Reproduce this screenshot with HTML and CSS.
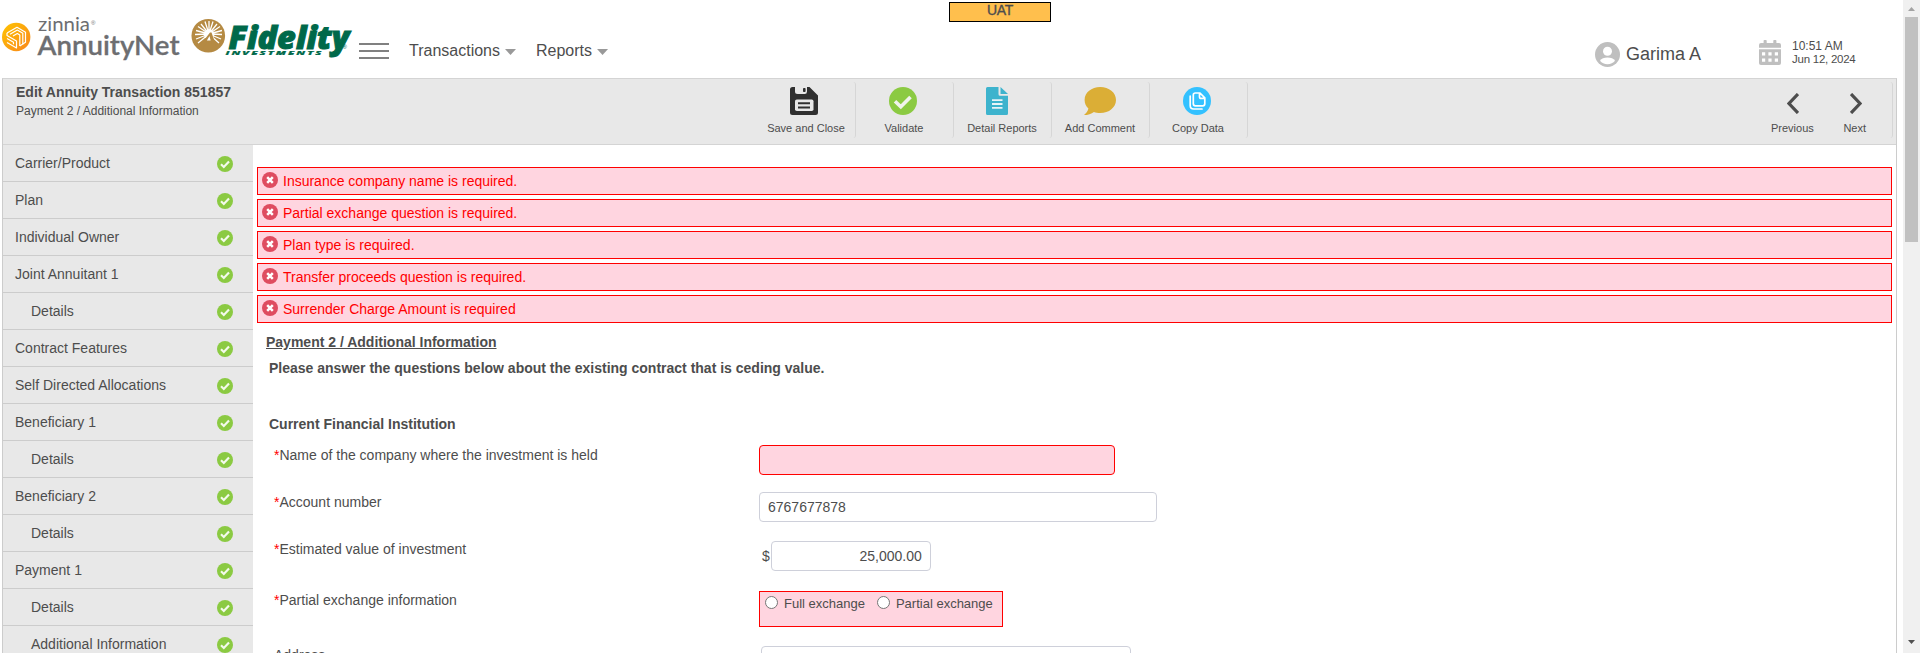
FILE: index.html
```html
<!DOCTYPE html>
<html lang="en">
<head>
<meta charset="utf-8">
<title>AnnuityNet - Edit Annuity Transaction</title>
<link rel="stylesheet" href="styles.css">
</head>
<body>
<svg width="0" height="0" class="defs">
  <symbol id="ok" viewBox="0 0 16 16"><circle cx="8" cy="8" r="8" fill="#8bca42"/><path d="M4 8.3 6.8 11 12 5.6" fill="none" stroke="#f4faec" stroke-width="2.2"/></symbol>
  <symbol id="bad" viewBox="0 0 16 16"><circle cx="8" cy="8" r="8" fill="#df4c60"/><path d="m5.2 5.2 5.6 5.6m0-5.6-5.6 5.6" fill="none" stroke="#fff" stroke-width="2.5"/></symbol>
</svg>
<div class="env">UAT</div>
<div class="window">
  <div class="page">
    <header class="top">
      <svg class="logos" width="356" height="66" viewBox="0 0 356 66">
        <defs>
          <linearGradient id="sun" x1="0" y1="0" x2="1" y2="1"><stop offset="0" stop-color="#ffc400"/><stop offset="1" stop-color="#f9861d"/></linearGradient>
        </defs>
        <circle cx="16.200" cy="37" r="14.200" fill="url(#sun)"/>
        <g fill="none" stroke="#fff" stroke-width="1.200" stroke-linejoin="round">
          <path d="M7 33 17 27.300 25.500 32.200V42.300L22.800 44"/>
          <path d="M7 33v2.500l9.500 5.500v7L7 42.500"/>
          <path d="M10 34.200 17.300 30 22.800 33.200V44l-3 1.900"/>
          <path d="M13 36 17.300 33.500 19.800 35V45.900M7 38.500l6.500 3.800v2"/>
        </g>
        <text class="zinnia" x="38" y="31" textLength="52" lengthAdjust="spacingAndGlyphs">zinnia</text>
        <text class="reg" x="91" y="24.500">®</text>
        <text class="anet" x="37.500" y="55.300" textLength="142" lengthAdjust="spacingAndGlyphs">AnnuityNet</text>
        <circle cx="208.300" cy="35.700" r="16.800" fill="#b58a43"/>
        <g stroke="#fff" stroke-width="1.300" fill="none">
          <path d="M209 34V21M209 34l-4-12.500M209 34l4-12.500M209 34l-8-10M209 34l8-10M209 34l-11-7.500M209 34l11-7.500M209 34l-13-3.500M209 34l13-3.500M209 34l-14 .5M209 34l13 .5M209 34l-13 5M209 34l12 5M209 34l-11 9M209 34l10 9"/>
        </g>
        <circle cx="209" cy="34.500" r="5" fill="#fff"/>
        <path d="M210 32.500h1.500l5.500 16-3.500 3-2.500-9h-4l-5.500 8-4-2Z" fill="#b58a43"/>
        <path d="m209.500 36-2.600 4.500h3.700Z" fill="#fff"/>
        <text class="fid" x="228.500" y="48.800" textLength="121" lengthAdjust="spacingAndGlyphs">Fidelity</text>
        <text class="inv" x="225.500" y="55" textLength="98" lengthAdjust="spacingAndGlyphs">INVESTMENTS</text>
        <text class="reg reg-f" x="342.500" y="49">®</text>
      </svg>
      <div class="burger"><i></i><i></i><i></i></div>
      <nav class="menu">
        <a>Transactions<b class="caret"></b></a>
        <a>Reports<b class="caret"></b></a>
      </nav>
      <div class="user">
        <svg width="25" height="25" viewBox="0 0 25 25"><circle cx="12.500" cy="12.500" r="12.500" fill="#bfbfbf"/><circle cx="12.500" cy="9.300" r="4.500" fill="#fff"/><path d="M5 18.800c1.500-2.200 4-3.300 7.500-3.300s6 1.100 7.500 3.300c-1.800 2.200-4.300 3.400-7.500 3.400S6.800 21 5 18.800Z" fill="#fff"/></svg>
        <span>Garima A</span>
      </div>
      <div class="clock">
        <svg width="22" height="25" viewBox="0 0 22 25"><path d="M0 7.800V5a2 2 0 0 1 2-2h2.600V.8q0-.8.800-.8h1.500q.8 0 .8.800V3h6.600V.8q0-.8.800-.8h1.500q.8 0 .8.800V3H20a2 2 0 0 1 2 2v2.800Z" fill="#bfbfbf"/><path d="M0 9.300h22V23a2 2 0 0 1-2 2H2a2 2 0 0 1-2-2Z" fill="#bfbfbf"/><path d="M3 12.200h3.200v3.200H3zm6.400 0h3.200v3.200H9.400zm6.400 0H19v3.200h-3.200zM3 18.600h3.200v3.200H3zm6.400 0h3.200v3.200H9.400zm6.400 0H19v3.200h-3.200z" fill="#fff"/></svg>
        <div><div class="time">10:51 AM</div><div class="date">Jun 12, 2024</div></div>
      </div>
    </header>
    <div class="frame">
      <div class="toolbar">
        <div class="heading">
          <div class="title">Edit Annuity Transaction 851857</div>
          <div class="subtitle">Payment 2 / Additional Information</div>
        </div>
        <div class="tools">
          <div class="tool t-save">
            <svg width="28" height="28" viewBox="0 0 28 28"><path d="M2.500 0H5v4.500Q5 7 7.500 7h7.200Q17 7 17 4.500V0h2.500L28 8.500v17a2.500 2.500 0 0 1-2.500 2.500h-23A2.500 2.500 0 0 1 0 25.500v-23A2.500 2.500 0 0 1 2.500 0Z" fill="#303030"/><rect x="13" y="1" width="2.600" height="4" rx=".8" fill="#303030"/><rect x="5" y="12.500" width="18.500" height="11.500" rx="1.800" fill="#e8e8e8"/><path d="M8 16.200h12M8 20.400h12" stroke="#303030" stroke-width="2"/></svg>
            <span>Save and Close</span>
          </div>
          <div class="tool t-val">
            <svg width="28" height="28" viewBox="0 0 28 28"><circle cx="14" cy="14" r="14" fill="#8bca42"/><path d="m6 14.300 5.800 5.500L21.500 10" fill="none" stroke="#f0f3ec" stroke-width="3.600"/></svg>
            <span>Validate</span>
          </div>
          <div class="tool t-det">
            <svg width="22" height="28" viewBox="0 0 22 28"><path d="M1.500 0H12.500v7.200q0 1.500 1.500 1.500H22V26.500q0 1.500-1.500 1.500h-19Q0 28 0 26.500v-25Q0 0 1.500 0Z" fill="#3db3cd"/><path d="M14.500 0 22 7h-7.500Z" fill="#3db3cd"/><path d="M6 13.100h10.500M6 17h10.500M6 20.800h10.500" stroke="#e8f4f7" stroke-width="1.800"/></svg>
            <span>Detail Reports</span>
          </div>
          <div class="tool t-com">
            <svg width="32" height="28" viewBox="0 0 32 28"><path d="M16.200 0C25 0 32 5.600 32 12.900S25 26 16.200 26c-2.300 0-4.500-.3-6.300-1.100C7.500 27 3.800 28 0 28c2.300-1.800 4-3.900 4.400-6.500C2 19.300.6 16.200.6 12.900.6 5.600 7.500 0 16.200 0Z" fill="#dbae36"/></svg>
            <span>Add Comment</span>
          </div>
          <div class="tool t-copy">
            <svg width="28" height="28" viewBox="0 0 28 28"><circle cx="14" cy="14" r="14" fill="#33c1ff"/><g fill="none" stroke="#fff" stroke-width="1.700" stroke-linejoin="round"><path d="M12.300 6H17l4.800 4.800v6q0 2-2 2h-7.500q-2 0-2-2V8q0-2 2-2ZM16.500 6.500v3.200q0 1.700 1.700 1.700h3.300"/><path d="M7.200 9.200v9.300q0 3.500 3.500 3.500h8.300" stroke-linecap="round"/></g></svg>
            <span>Copy Data</span>
          </div>
        </div>
        <div class="pager">
          <div class="step"><svg width="12" height="21" viewBox="0 0 12 21"><path d="M11 1 2 10.500 11 20" fill="none" stroke="#4d4d4d" stroke-width="3.200"/></svg><span>Previous</span></div>
          <div class="step"><svg width="12" height="21" viewBox="0 0 12 21"><path d="m1 1 9 9.500L1 20" fill="none" stroke="#4d4d4d" stroke-width="3.200"/></svg><span>Next</span></div>
        </div>
      </div>
      <div class="body">
        <ul class="side">
          <li>Carrier/Product<svg><use href="#ok"/></svg></li>
          <li>Plan<svg><use href="#ok"/></svg></li>
          <li>Individual Owner<svg><use href="#ok"/></svg></li>
          <li>Joint Annuitant 1<svg><use href="#ok"/></svg></li>
          <li class="sub">Details<svg><use href="#ok"/></svg></li>
          <li>Contract Features<svg><use href="#ok"/></svg></li>
          <li>Self Directed Allocations<svg><use href="#ok"/></svg></li>
          <li>Beneficiary 1<svg><use href="#ok"/></svg></li>
          <li class="sub">Details<svg><use href="#ok"/></svg></li>
          <li>Beneficiary 2<svg><use href="#ok"/></svg></li>
          <li class="sub">Details<svg><use href="#ok"/></svg></li>
          <li>Payment 1<svg><use href="#ok"/></svg></li>
          <li class="sub">Details<svg><use href="#ok"/></svg></li>
          <li class="sub">Additional Information<svg><use href="#ok"/></svg></li>
        </ul>
        <main class="main">
          <div class="alerts">
            <div class="alert"><svg><use href="#bad"/></svg>Insurance company name is required.</div>
            <div class="alert"><svg><use href="#bad"/></svg>Partial exchange question is required.</div>
            <div class="alert"><svg><use href="#bad"/></svg>Plan type is required.</div>
            <div class="alert"><svg><use href="#bad"/></svg>Transfer proceeds question is required.</div>
            <div class="alert"><svg><use href="#bad"/></svg>Surrender Charge Amount is required</div>
          </div>
          <h1>Payment 2 / Additional Information</h1>
          <p class="lead">Please answer the questions below about the existing contract that is ceding value.</p>
          <h2>Current Financial Institution</h2>
          <div class="row r1"><label><em>*</em>Name of the company where the investment is held</label><div class="box invalid w-name"></div></div>
          <div class="row r2"><label><em>*</em>Account number</label><div class="box w-acct">6767677878</div></div>
          <div class="row r3"><label><em>*</em>Estimated value of investment</label><div class="money"><span>$</span><div class="box w-val">25,000.00</div></div></div>
          <div class="row r4"><label><em>*</em>Partial exchange information</label>
            <div class="radios"><span class="opt"><i></i>Full exchange</span><span class="opt"><i></i>Partial exchange</span></div></div>
          <div class="row r5"><label>Address</label><div class="box w-addr"></div></div>
        </main>
      </div>
    </div>
  </div>
  <div class="scroll"><i class="up"></i><div class="thumb"></div><i class="down"></i></div>
</div>
</body>
</html>
```
FILE: styles.css
```css
* { box-sizing: border-box; }
html, body { height: 653px; overflow: hidden; }
body { margin: 0; background: #fff; color: #4d4d4d; font: 14px/20px "Liberation Sans", Arial, sans-serif; }
.defs { position: absolute; }
svg { display: block; flex: none; }
.env { position: absolute; left: 949px; top: 2px; width: 102px; height: 20px; border: 1px solid #000; background: #ffbf4d; text-align: center; font-size: 14px; line-height: 15px; letter-spacing: -.3px; -webkit-text-stroke: .35px #4d4d4d; }
.window { display: flex; height: 653px; }
.page { flex: 1; display: flex; flex-direction: column; padding: 0 6px 0 2px; min-width: 0; }

.top { display: flex; height: 78px; flex: none; margin-left: -2px; }
.logos { flex: none; overflow: visible; }
.zinnia { font: 19.500px Lato, sans-serif; fill: #6d6e71; }
.anet { font: 600 27px Lato, sans-serif; fill: #6d6e71; stroke: #6d6e71; stroke-width: .3px; }
.reg { font: 6px Arial, "Liberation Sans", sans-serif; fill: #6d6e71; }
.reg-f { fill: #00694a; }
.fid { font: italic 800 32px "Open Sans", sans-serif; fill: #00694a; stroke: #00694a; stroke-width: 1px; }
.inv { font: italic 800 5.500px "Open Sans", sans-serif; fill: #00694a; stroke: #00694a; stroke-width: .2px; letter-spacing: 1px; }
.burger { width: 30px; margin: 43px 0 0 3px; display: flex; flex-direction: column; gap: 5px; }
.burger i { height: 2px; background: #808080; }
.menu { display: flex; gap: 20px; margin: 41px 0 0 20px; font-size: 16px; }
.menu a { display: flex; }
.caret { margin: 8px 0 0 5px; width: 11px; height: 6px; background: #999; clip-path: polygon(0 0, 100% 0, 50% 100%); }
.user { display: flex; gap: 6px; margin: 42px 0 0 auto; font-size: 18px; line-height: 24px; width: 164px; }
.clock { display: flex; gap: 11px; width: 137px; margin-top: 40px; font-size: 12px; line-height: 14px; margin-right: 1px; }
.clock > div { margin-top: -1px; white-space: nowrap; }
.date { margin-top: -1px; letter-spacing: -.25px; font-size: 11.500px; }

.frame { flex: 1; border: 1px solid #ccc; border-bottom: 0; border-top-color: #d4d4d4; display: flex; flex-direction: column; min-height: 0; }
.toolbar { display: flex; height: 66px; flex: none; background: #e8e8e8; border-bottom: 1px solid #d4d4d4; }
.heading { padding: 3px 0 0 13px; width: 755px; }
.title { font-weight: bold; line-height: 20px; }
.subtitle { font-size: 12px; line-height: 18px; }
.tools { display: flex; padding-top: 3px; font-size: 11px; line-height: 14px; }
.tool, .step { display: flex; flex-direction: column; align-items: center; white-space: nowrap; }
.tool { width: 98px; height: 56px; border-right: 1px solid #d6d6d6; border-radius: 0 3px 3px 0; padding-top: 5px; }
.tool svg { margin: 0 4px 6px 0; }
.tool span { margin-right: 1px; }
.t-save svg { margin-right: 6px; }
.t-det svg { margin-right: 11px; }
.t-com svg { margin-right: 2px; }
.pager { display: flex; margin: 3px 3px 0 auto; width: 140px; height: 56px; border-right: 1px solid #d6d6d6; border-radius: 0 3px 3px 0; font-size: 11px; line-height: 14px; padding: 11px 26px 0 18px; justify-content: space-between; }
.step svg { margin: 0 0 7px 2px; }

.body { display: flex; flex: 1; min-height: 0; }
.side { width: 250px; flex: none; margin: 0; padding: 0; list-style: none; background: #e8e8e8; overflow: hidden; }
.side li { display: flex; align-items: center; justify-content: space-between; height: 37px; padding: 0 20px 0 12px; border-bottom: 1px solid #ccc; }
.side li.sub { padding-left: 28px; }
.side svg { width: 16px; height: 16px; margin-top: 2px; }

.main { flex: 1; padding: 22px 4px 0; overflow: hidden; }
.alerts { display: flex; flex-direction: column; gap: 4px; }
.alert { display: flex; gap: 5px; height: 28px; border: 1px solid #f00; background: #ffd5e0; color: #f00; padding: 3px 0 0 4px; line-height: 20px; }
.alert svg { width: 16px; height: 16px; margin-top: 1px; }
h1, h2, .lead { font-size: 14px; line-height: 20px; font-weight: bold; margin: 0; }
h1 { margin: 9px 0 0 9px; text-decoration: underline; }
.lead { margin: 6px 0 0 12px; }
h2 { margin: 36px 0 11px 12px; }
.row { display: grid; grid-template-columns: 485px auto; justify-content: start; padding-left: 17px; }
.row em { color: #f00; font-style: normal; }
.r1 { height: 47px; } .r2 { height: 49px; } .r3 { height: 50px; } .r4 { height: 55px; }
.r3 label { margin-top: -2px; }
.r4 label, .r5 label { margin-top: -1px; }
.box { height: 30px; border: 1px solid #ced0da; border-radius: 4px; padding: 0 8px; line-height: 29px; background: #fff; }
.invalid { border-color: #f00; background: #ffd5e0; }
.w-name { width: 356px; }
.w-acct { width: 398px; }
.money { display: flex; line-height: 30px; padding-left: 3px; gap: 1px; }
.w-val { width: 160px; text-align: right; }
.w-addr { width: 370px; margin-left: 2px; }
.radios { width: 244px; height: 36px; border: 1px solid #f00; background: #ffd5e0; display: flex; gap: 12px; padding: 2px 0 0 5px; font-size: 13px; }
.opt { display: flex; gap: 6px; }
.opt i { width: 13px; height: 13px; border: 1px solid #767676; border-radius: 50%; background: #fff; margin-top: 2px; }

.scroll { width: 17px; background: #f0f0f0; padding: 7px 0 9px 2px; display: flex; flex-direction: column; }
.scroll i { width: 7px; height: 4px; margin-left: 3px; }
.up { background: #a3a3a3; clip-path: polygon(50% 0, 100% 100%, 0 100%); }
.down { background: #505050; clip-path: polygon(0 0, 100% 0, 50% 100%); margin-top: auto; }
.thumb { width: 13px; height: 225px; margin-top: 6px; background: #c1c1c1; }
```
